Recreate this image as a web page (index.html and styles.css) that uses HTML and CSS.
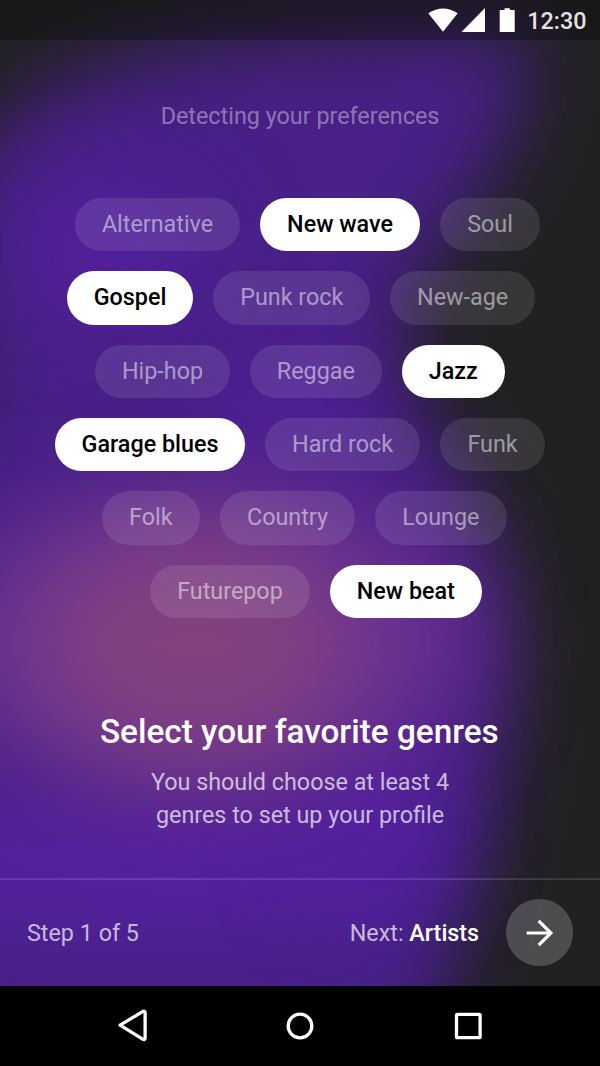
FILE: index.html
```html
<!DOCTYPE html>
<html lang="en">
<head>
<meta charset="utf-8">
<title>Select your favorite genres</title>
<link rel="stylesheet" href="styles.css">
</head>
<body>
<div class="screen">
  <svg class="backdrop" viewBox="0 0 600 986" aria-hidden="true">
    <defs>
      <filter id="soft" x="-50%" y="-50%" width="200%" height="200%" color-interpolation-filters="sRGB"><feGaussianBlur stdDeviation="40"/></filter>
      <filter id="softer" x="-100%" y="-150%" width="300%" height="400%" color-interpolation-filters="sRGB"><feGaussianBlur stdDeviation="50"/></filter>
    </defs>
    <rect width="600" height="986" fill="#212121"/>
    <path filter="url(#soft)" fill="#482087" d="M-40 180 C0 80 140 40 320 36 L520 26 C535 80 520 130 480 190 C440 245 412 280 400 340 C405 400 460 450 485 520 C512 600 515 720 495 800 C475 880 445 940 435 1120 L-160 1120 L-160 490 C-80 460 -38 430 -35 385 C-38 330 -60 230 -40 180Z"/>
    <ellipse filter="url(#softer)" cx="110" cy="250" rx="90" ry="60" fill="#5520a2"/>
    <ellipse filter="url(#softer)" cx="290" cy="405" rx="80" ry="35" fill="#5520a2"/>
    <ellipse filter="url(#softer)" cx="150" cy="865" rx="290" ry="55" fill="#5722a6"/>
    <ellipse filter="url(#softer)" cx="375" cy="820" rx="60" ry="80" fill="#5420a4"/>
    <ellipse filter="url(#softer)" cx="205" cy="640" rx="275" ry="150" fill="#693093"/>
    <ellipse filter="url(#softer)" cx="195" cy="645" rx="160" ry="115" fill="#82427f"/>
  </svg>

  <header class="status">
    <svg class="status-icons" viewBox="0 0 90 26" fill="#fff">
      <path d="M0.3 5.3 Q15 -4.1 29.7 5.3 L15 23.7Z"/>
      <path d="M33.5 24 L57 0 V24Z"/>
      <path d="M71.7 2 H76.6 V0.3 H81.9 V2 H86.7 V24 H71.7Z"/>
    </svg>
    <span class="clock">12:30</span>
  </header>

  <main class="content">
    <p class="hint">Detecting your preferences</p>
    <div class="genres">
      <div class="row r1"><span class="chip" style="width:165px">Alternative</span><span class="chip on" style="width:160px">New wave</span><span class="chip" style="width:100px">Soul</span></div>
      <div class="row r2"><span class="chip on" style="width:126.7px">Gospel</span><span class="chip" style="width:156.7px">Punk rock</span><span class="chip" style="width:145px">New-age</span></div>
      <div class="row r3"><span class="chip" style="width:135px">Hip-hop</span><span class="chip" style="width:131.7px">Reggae</span><span class="chip on" style="width:103.3px">Jazz</span></div>
      <div class="row r4"><span class="chip on" style="width:190px">Garage blues</span><span class="chip" style="width:155px">Hard rock</span><span class="chip" style="width:105px">Funk</span></div>
      <div class="row r5"><span class="chip" style="width:98.3px">Folk</span><span class="chip" style="width:135px">Country</span><span class="chip" style="width:131.7px">Lounge</span></div>
      <div class="row r6"><span class="chip" style="width:160px">Futurepop</span><span class="chip on" style="width:151.7px">New beat</span></div>
    </div>
    <h1 class="title">Select your favorite genres</h1>
    <p class="subtitle">You should choose at least 4<br>genres to set up your profile</p>
  </main>

  <footer class="steps">
    <span class="step">Step 1 of 5</span>
    <span class="next">Next: <b>Artists</b></span>
    <button class="go" aria-label="Next"><svg viewBox="0 0 28 28" fill="none" stroke="#fff" stroke-width="3.2"><path d="M0.7 14 H25 M12.7 1.8 L24.9 14 L12.7 26.2"/></svg></button>
  </footer>
</div>

<nav class="navbar">
  <svg viewBox="0 0 600 80" fill="none" stroke="#fff" stroke-width="3.3" stroke-linejoin="round">
    <path d="M120.1 39.2 L143 25.4 Q145.1 24.6 145.1 26.7 V51.8 Q145.1 54.3 143 53.3Z"/>
    <circle cx="300" cy="40" r="11.8"/>
    <rect x="456.5" y="28.3" width="23.6" height="23.4" rx="1"/>
  </svg>
</nav>
</body>
</html>
```
FILE: styles.css
```css
* { box-sizing: border-box; }

body {
  margin: 0;
  width: 600px;
  height: 1066px;
  overflow: hidden;
  background: #000;
  color: #fff;
  font-family: Roboto, "Liberation Sans", sans-serif;
  font-size: 23.33px;
}

h1, p { margin: 0; }

.screen {
  position: relative;
  display: flex;
  flex-direction: column;
  height: 986px;
  overflow: hidden;
}

.backdrop {
  position: absolute;
  inset: 0;
  width: 600px;
  height: 986px;
  z-index: -1;
}

.status {
  display: flex;
  justify-content: flex-end;
  align-items: center;
  height: 40px;
  padding-right: 13.5px;
  background: rgba(0, 0, 0, 0.25);
}

.status-icons {
  width: 90px;
  height: 26px;
  margin: 1px 9.5px 0 0;
}

.clock {
  padding-top: 1px;
  font-weight: 500;
  color: rgba(255, 255, 255, 0.9);
}

.content {
  display: flex;
  flex-direction: column;
  height: 838px;
  text-align: center;
}

.hint {
  margin-top: 60px;
  line-height: 33px;
  color: rgba(255, 255, 255, 0.4);
}

.genres {
  display: flex;
  flex-direction: column;
  gap: 20px;
  margin-top: 65px;
}

.row {
  display: flex;
  gap: 20px;
}

.r1 { padding-left: 75px; }
.r2 { padding-left: 66.7px; }
.r3 { padding-left: 95px; }
.r4 { padding-left: 55px; }
.r5 { padding-left: 101.7px; }
.r6 { padding-left: 150px; }

.chip {
  flex: none;
  height: 53.33px;
  border-radius: 27px;
  background: rgba(255, 255, 255, 0.1);
  color: rgba(255, 255, 255, 0.5);
  line-height: 52px;
  white-space: nowrap;
}

.chip.on {
  background: #fff;
  color: #000;
  font-weight: 500;
}

.title {
  margin-top: 94.2px;
  padding-right: 1.4px;
  font-size: 33.33px;
  line-height: 40px;
  font-weight: 500;
}

.subtitle {
  margin-top: 14px;
  line-height: 33.3px;
  color: rgba(255, 255, 255, 0.7);
}

.steps {
  display: flex;
  align-items: center;
  height: 108px;
  padding: 0 27px 1px;
  border-top: 2px solid rgba(255, 255, 255, 0.12);
}

.step, .next {
  padding-top: 1px;
  color: rgba(255, 255, 255, 0.7);
}

.next { margin-left: auto; }

.next b {
  font-weight: 500;
  color: #fff;
}

.go {
  display: grid;
  place-items: center;
  width: 66.6px;
  height: 66.6px;
  margin-left: 27.3px;
  padding: 0;
  border: 0;
  border-radius: 50%;
  background: rgba(255, 255, 255, 0.2);
}

.go svg {
  width: 28px;
  height: 28px;
}

.navbar {
  height: 80px;
  background: #000;
}

.navbar svg {
  display: block;
  width: 600px;
  height: 80px;
}
```
